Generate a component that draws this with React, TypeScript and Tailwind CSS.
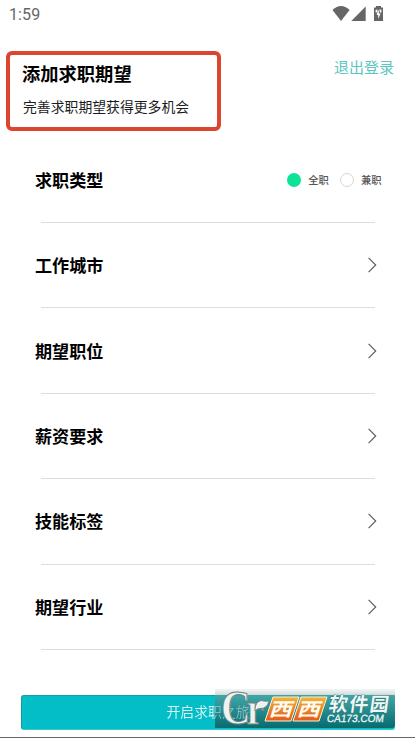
import React from 'react';

const ChevronRight = () => {
    return (
        <svg className="w-[9px] h-4" viewBox="0 0 9 16" fill="none" stroke="#5c5c5c" strokeWidth="1.15">
            <path d="M0.6 0.9L7.7 8L0.6 15.1" />
        </svg>
    )
}

const StatusBar = () => {
    return (
        <div className="h-[51px] pl-[9px] pr-[31px] pt-[5px] flex justify-between items-start text-[#666666]">
            <span className="font-['Roboto',sans-serif] text-[16px] leading-[19px] tracking-[0.1px]">1:59</span>
            <svg className="w-[52px] h-4 mt-px" viewBox="0 0 52 16" fill="currentColor">
                <path d="M0.5 4Q9 -3.8 17.6 4L9 15Z" />
                <path d="M33.7 0.5V15H19.3Z" />
                <path d="M42 1.6H44V0H49V1.6H51V15H42Z" />
                <path d="M43.6 4L45.6 3.6L45.2 6.6H43.6ZM47.4 3.6H49.4V6.6H47.9ZM46.2 4.4H47L46.8 7.6H48.6L46.2 13V9H44.6Z" fill="#ffffff" />
            </svg>
        </div>
    )
}

const Header = () => {
    return (
        <div className="h-20 pl-1.5 pr-[21px] flex justify-between items-start">
            <div className="w-[215px] h-20 border-4 border-solid border-[#dc4630] rounded-[6px] pl-3 pt-1.5">
                <h1 className="text-[18.3px] leading-6 font-bold text-black">添加求职期望</h1>
                <p className="mt-[11px] pl-px text-[13.85px] leading-5 text-[#1c1c1c]">完善求职期望获得更多机会</p>
            </div>
            <span className="mt-[6px] text-[15px] leading-5 text-[#5cc5bf]">退出登录</span>
        </div>
    )
}

const Radio = ({ label, checked }: { label: string; checked?: boolean }) => {
    return (
        <label className="flex items-center">
            <span className={checked ? "w-[14px] h-[14px] rounded-full bg-[#0de397]" : "w-[14px] h-[14px] rounded-full border border-solid border-[#d6d6d6]"} />
            <span className="pl-[7px] text-[10.3px] leading-4 font-medium text-[#555555]">{label}</span>
        </label>
    )
}

const Row = ({ label, children }: { label: string; children: React.ReactNode }) => {
    return (
        <div className="h-[85.4px] flex flex-col">
            <div className="flex-1 pl-[35px] flex items-center justify-between">
                <span className="text-[17.1px] leading-6 font-bold text-black">{label}</span>
                {children}
            </div>
            <div className="ml-[41px] mr-10 h-px bg-[#dddddd]" />
        </div>
    )
}

const rows = ['工作城市', '期望职位', '薪资要求', '技能标签', '期望行业'];

const SiteLogo = () => {
    return (
        <svg className="absolute left-[215px] top-[-6px] w-[180px] h-10" viewBox="0 0 180 40">
            <defs>
                <linearGradient id="tile" x1="0" y1="0" x2="0" y2="1">
                    <stop offset="0" stopColor="#f0b53a" />
                    <stop offset="1" stopColor="#e4581a" />
                </linearGradient>
            </defs>
            <g fill="#eef3f2" stroke="#6d8583" strokeWidth="1" strokeLinejoin="round" fontWeight="bold" className="font-['Liberation_Serif',serif]">
                <text transform="translate(6 34.5) scale(0.85 1)" fontSize="48">C</text>
                <text transform="translate(31.5 34.5) scale(0.85 1)" fontSize="46">r</text>
                <path d="M40 21Q40 13 46 11.5Q50 12.5 54 12Q52 20 45 19.5Q42 19.5 40 22Z" />
            </g>
            <g fill="url(#tile)" stroke="#fff0d5" strokeWidth="1">
                <path d="M58 8H84L76 32H50Z" />
                <path d="M86 8H112L104 32H78Z" />
            </g>
            <g fill="#fffaf0" fontWeight="bold">
                <text transform="translate(53.5 26.6) skewX(-17) scale(1.25 1)" fontSize="18.5">西</text>
                <text transform="translate(81.5 26.6) skewX(-17) scale(1.25 1)" fontSize="18.5">西</text>
            </g>
            <g fill="#edf7f6" stroke="#2f7475" strokeWidth="0.8" paintOrder="stroke" fontWeight="bold">
                <text transform="translate(113 21.5) skewX(-8)" fontSize="19" textLength="60">软件园</text>
                <text transform="translate(111.5 33) skewX(-8)" fontSize="10.5" fontWeight="normal" textLength="57" lengthAdjust="spacingAndGlyphs" stroke="#edf7f6" strokeWidth="0.3" className="font-['Liberation_Sans',sans-serif]">CA173.COM</text>
            </g>
        </svg>
    )
}

const SubmitBar = () => {
    return (
        <div className="relative mt-auto mb-[7px]">
            <button className="relative ml-[21px] w-[374px] h-[35px] rounded-[3px] flex items-center justify-center bg-[#04bec7] border border-solid border-t-[#139ca5] border-l-[#139ca5] border-r-[#35cbd1] border-b-[#35cbd1] text-[13.85px]">
                <span className="absolute left-[193px] top-[-7px] w-[180px] h-[39px] rounded-br-[3px] bg-linear-[180deg,#d8dfdf4d_0%,#b9c8c899_14%,#48a4a5e6_16%,#07686bf5_100%]" />
                <span className="relative top-[-1px] bg-linear-[90deg,#d9f7f8_57%,#83bdbe_59%] bg-clip-text text-transparent">开启求职之旅</span>
            </button>
            <SiteLogo />
        </div>
    )
}

const App = () => {
    return (
        <div className="w-[415px] h-[738px] overflow-hidden bg-white flex flex-col font-['Noto_Sans_CJK_SC',sans-serif]">
            <StatusBar />
            <Header />
            <div className="mt-[6.6px]">
                <Row label="求职类型">
                    <div className="pr-[33.5px] flex items-center gap-[11px]">
                        <Radio label="全职" checked />
                        <Radio label="兼职" />
                    </div>
                </Row>
                {rows.map((label) => (
                    <Row key={label} label={label}>
                        <div className="pr-[38px]">
                            <ChevronRight />
                        </div>
                    </Row>
                ))}
            </div>
            <SubmitBar />
            <div className="h-px shrink-0 bg-[#666666]" />
        </div>
    )
}

export default App
